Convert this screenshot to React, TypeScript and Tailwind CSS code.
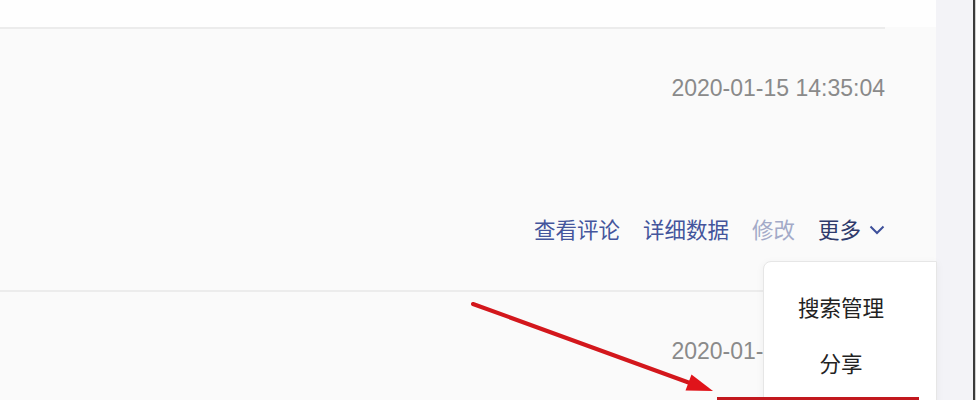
import { ReactNode } from 'react';

// Lista de conteúdos com menu "更多" aberto e anotação em vermelho
const cjk = '"Noto Sans CJK SC", "Liberation Sans", sans-serif';
const num = '"Liberation Sans", "Noto Sans CJK SC", sans-serif';

type RowProps = {
  time: string;
  children?: ReactNode;
  height: string;
};

const Row = ({ time, children, height }: RowProps) => (
  <div className={`w-[885px] border-t-2 border-[#ececec] flex flex-col items-end pt-[48px] ${height}`}>
    <div className="text-[23px] leading-[23px] text-[#8a8a8a]" style={{ fontFamily: num }}>
      {time}
    </div>
    {children}
  </div>
);

const Actions = () => (
  <div
    className="mt-[118px] flex items-center gap-[23px] text-[21.5px] leading-[21.5px]"
    style={{ fontFamily: cjk }}
  >
    <span className="text-[#44559c]">查看评论</span>
    <span className="text-[#44559c]">详细数据</span>
    <span className="text-[#a3aac8]">修改</span>
    <span className="flex items-center gap-[8px] text-[#2f3a6b]">
      更多
      <svg width="16" height="10" viewBox="0 0 16 10" className="mt-[2px]">
        <polyline points="1.5,1.5 8,8 14.5,1.5" fill="none" stroke="#3d4f9a" strokeWidth="2" />
      </svg>
    </span>
  </div>
);

const App = () => {
  return (
    <div className="flex h-[400px] w-[976px] overflow-hidden bg-[#fafafa]">
      <div className="relative flex-1 flex flex-col">
        <div className="h-[27px] bg-[#fefefe]" />
        <Row time="2020-01-15 14:35:04" height="h-[263px]">
          <Actions />
        </Row>
        <Row time="2020-01-15 14:35:04" height="flex-1" />

        {/* menu suspenso */}
        <div
          className="absolute left-[763px] top-[261px] w-[174px] h-[160px] bg-white border border-[#e6e6e6] rounded-tl-[8px] shadow-[0_2px_8px_rgba(0,0,0,0.05)] pr-[18px] pt-[34px] flex flex-col items-center gap-[34px] text-[21.5px] leading-[22px] text-[#222]"
          style={{ fontFamily: cjk }}
        >
          <span>搜索管理</span>
          <span>分享</span>
        </div>

        {/* anotação */}
        <div className="absolute left-[717px] top-[397px] w-[202px] h-[30px] border-[3px] border-[#c2181e]" />
        <svg className="absolute left-0 top-0" width="936" height="400" viewBox="0 0 936 400">
          <line x1="473" y1="304" x2="694" y2="384.5" stroke="#d3171c" strokeWidth="4" strokeLinecap="round" />
          <polygon points="713,391 685.5,390.5 691.5,374.5" fill="#e0141a" />
        </svg>
      </div>
      <div className="w-[37px] bg-[#f3f3f7]" />
      <div className="w-[2px] bg-[#3a3a3a]" />
      <div className="w-[1px] bg-[#cfcfcf]" />
    </div>
  );
};

export default App;
